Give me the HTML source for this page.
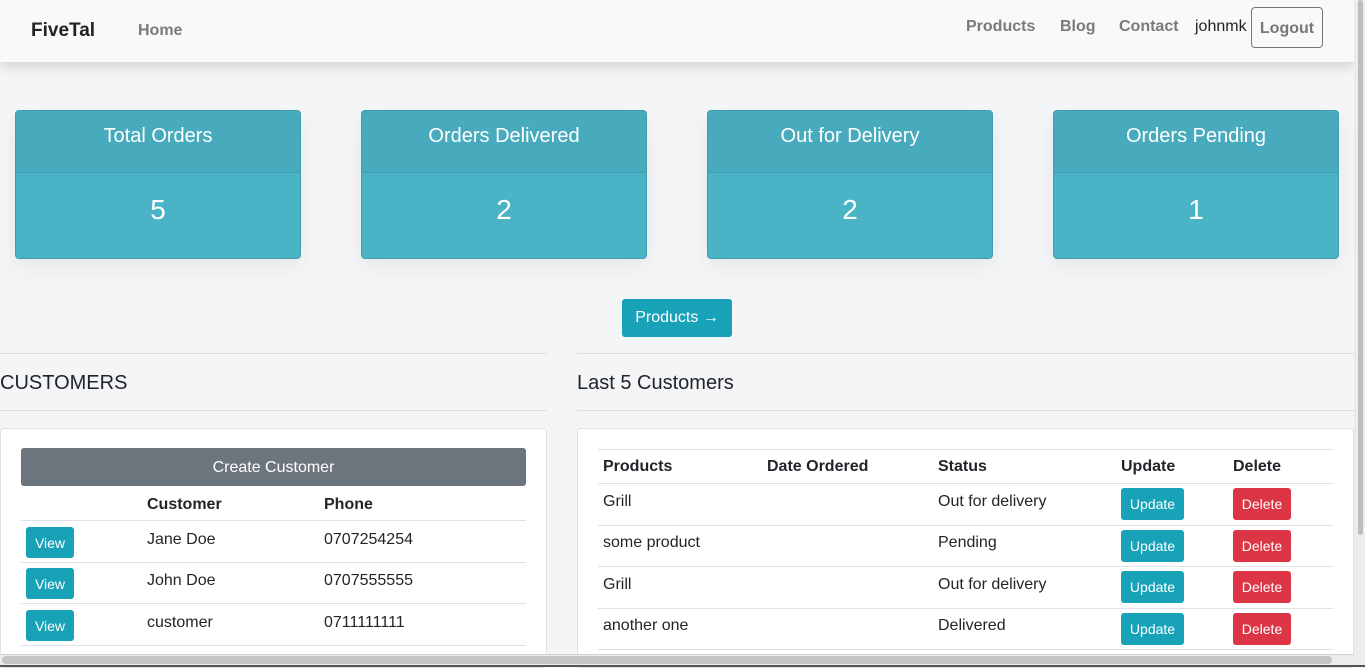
<!DOCTYPE html>
<html><head><meta charset="utf-8"><style>
*{box-sizing:border-box;margin:0;padding:0}
body{width:1365px;height:667px;overflow:hidden;background:#f4f5f6;font-family:"Liberation Sans",sans-serif;color:#212529;position:relative}
.a{position:absolute}
.nav{left:0;top:0;width:1354px;height:62px;background:#f8f9fa;box-shadow:0 4px 12px rgba(0,0,0,.15)}
.nl{font-weight:bold;font-size:16px;color:#7a7a7a}
.card{width:286px;height:149px;border:1px solid #3f9fb1;border-radius:4px;overflow:hidden;background:#4bb3c6;box-shadow:0 8px 20px rgba(0,0,0,.06)}
.card .h{height:62px;background:#47aabd;border-bottom:1px solid #3f9fb1;color:#fff;font-size:20px;text-align:center;padding-top:14px}
.card .n{color:#fff;font-size:28px;text-align:center;padding-top:21px}
.hr{height:1px;background:#dcdee0}
.btn{color:#fff;font-size:14px;text-align:center;border-radius:3px}
.t{font-size:16px}
.b{font-weight:bold}
.line{height:1px;background:#dee2e6}
</style></head><body>
<div class="a nav"></div>
<div class="a b" style="left:31px;top:20px;font-size:19px;color:#222">FiveTal</div>
<div class="a nl" style="left:138px;top:22px">Home</div>
<div class="a nl" style="left:966px;top:18px">Products</div>
<div class="a nl" style="left:1060px;top:18px">Blog</div>
<div class="a nl" style="left:1119px;top:18px">Contact</div>
<div class="a" style="left:1195px;top:18px;font-size:16px;color:#222">johnmk</div>
<div class="a nl" style="left:1251px;top:7px;width:72px;height:41px;border:1px solid #777;border-radius:4px;padding-top:12px;text-align:center;color:#777">Logout</div>

<div class="a card" style="left:15px;top:110px"><div class="h">Total Orders</div><div class="n">5</div></div>
<div class="a card" style="left:361px;top:110px"><div class="h">Orders Delivered</div><div class="n">2</div></div>
<div class="a card" style="left:707px;top:110px"><div class="h">Out for Delivery</div><div class="n">2</div></div>
<div class="a card" style="left:1053px;top:110px"><div class="h">Orders Pending</div><div class="n">1</div></div>

<div class="a btn" style="left:622px;top:299px;width:110px;height:38px;background:#17a2b8;font-size:16px;padding-top:10px">Products →</div>

<div class="a hr" style="left:0;top:353px;width:547px"></div>
<div class="a" style="left:0;top:372px;font-size:20px">CUSTOMERS</div>
<div class="a hr" style="left:0;top:410px;width:547px"></div>
<div class="a hr" style="left:577px;top:353px;width:777px"></div>
<div class="a" style="left:577px;top:372px;font-size:20px">Last 5 Customers</div>
<div class="a hr" style="left:577px;top:410px;width:777px"></div>

<div class="a" style="left:0;top:428px;width:547px;height:240px;background:#fff;border:1px solid #dfe1e3;border-radius:4px"></div>
<div class="a btn" style="left:21px;top:448px;width:505px;height:38px;background:#6c757d;font-size:16px;padding-top:11px">Create Customer</div>
<div class="a t b" style="left:147px;top:496px">Customer</div>
<div class="a t b" style="left:324px;top:496px">Phone</div>
<div class="a line" style="left:21px;top:520px;width:505px"></div>
<div class="a line" style="left:21px;top:562px;width:505px"></div>
<div class="a line" style="left:21px;top:603px;width:505px"></div>
<div class="a line" style="left:21px;top:645px;width:505px"></div>
<div class="a btn" style="left:26px;top:527px;width:48px;height:31px;background:#17a2b8;padding-top:8px">View</div>
<div class="a btn" style="left:26px;top:568px;width:48px;height:31px;background:#17a2b8;padding-top:8px">View</div>
<div class="a btn" style="left:26px;top:610px;width:48px;height:31px;background:#17a2b8;padding-top:8px">View</div>
<div class="a t" style="left:147px;top:531px">Jane Doe</div><div class="a t" style="left:324px;top:531px">0707254254</div>
<div class="a t" style="left:147px;top:572px">John Doe</div><div class="a t" style="left:324px;top:572px">0707555555</div>
<div class="a t" style="left:147px;top:614px">customer</div><div class="a t" style="left:324px;top:614px">0711111111</div>

<div class="a" style="left:577px;top:428px;width:777px;height:240px;background:#fff;border:1px solid #dfe1e3;border-radius:4px"></div>
<div class="a line" style="left:598px;top:449px;width:735px"></div>
<div class="a t b" style="left:603px;top:458px">Products</div>
<div class="a t b" style="left:767px;top:458px">Date Ordered</div>
<div class="a t b" style="left:938px;top:458px">Status</div>
<div class="a t b" style="left:1121px;top:458px">Update</div>
<div class="a t b" style="left:1233px;top:458px">Delete</div>
<div class="a line" style="left:598px;top:483px;width:735px"></div>
<div class="a line" style="left:598px;top:525px;width:735px"></div>
<div class="a line" style="left:598px;top:566px;width:735px"></div>
<div class="a line" style="left:598px;top:608px;width:735px"></div>
<div class="a line" style="left:598px;top:649px;width:735px"></div>
<div class="a t" style="left:603px;top:493px">Grill</div><div class="a t" style="left:938px;top:493px">Out for delivery</div>
<div class="a t" style="left:603px;top:534px">some product</div><div class="a t" style="left:938px;top:534px">Pending</div>
<div class="a t" style="left:603px;top:576px">Grill</div><div class="a t" style="left:938px;top:576px">Out for delivery</div>
<div class="a t" style="left:603px;top:617px">another one</div><div class="a t" style="left:938px;top:617px">Delivered</div>
<div class="a btn" style="left:1121px;top:488px;width:63px;height:32px;background:#17a2b8;padding-top:8px">Update</div>
<div class="a btn" style="left:1121px;top:530px;width:63px;height:32px;background:#17a2b8;padding-top:8px">Update</div>
<div class="a btn" style="left:1121px;top:571px;width:63px;height:32px;background:#17a2b8;padding-top:8px">Update</div>
<div class="a btn" style="left:1121px;top:613px;width:63px;height:32px;background:#17a2b8;padding-top:8px">Update</div>
<div class="a btn" style="left:1233px;top:488px;width:58px;height:32px;background:#dc3545;padding-top:8px">Delete</div>
<div class="a btn" style="left:1233px;top:530px;width:58px;height:32px;background:#dc3545;padding-top:8px">Delete</div>
<div class="a btn" style="left:1233px;top:571px;width:58px;height:32px;background:#dc3545;padding-top:8px">Delete</div>
<div class="a btn" style="left:1233px;top:613px;width:58px;height:32px;background:#dc3545;padding-top:8px">Delete</div>

<div class="a" style="left:1354px;top:0;width:11px;height:667px;background:#ececec"></div>
<div class="a" style="left:1358px;top:0;width:5px;height:535px;background:#bdbdbd;border-radius:3px"></div>
<div class="a" style="left:0;top:654px;width:1354px;height:13px;background:#ececec;border-top:1px solid #d0d0d0"></div>
<div class="a" style="left:2px;top:656px;width:1330px;height:8px;background:#c4c4c4;border-radius:4px"></div>
<div class="a" style="left:0;top:665px;width:1365px;height:2px;background:#555"></div>
</body></html>
